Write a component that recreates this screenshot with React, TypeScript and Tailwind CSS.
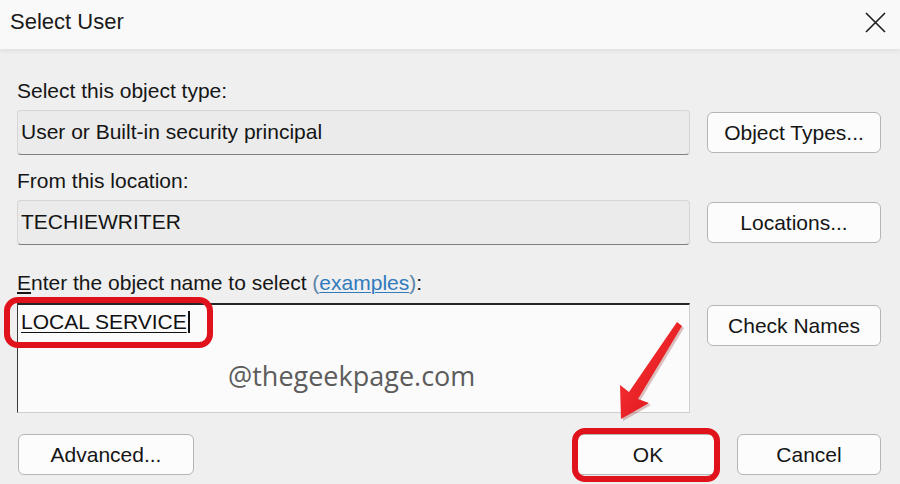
import React from 'react';

const font = { fontFamily: '"Liberation Sans", Arial, sans-serif' };

const Btn: React.FC<{ label: string; className?: string }> = ({ label, className = '' }) => (
  <button
    className={`h-[41px] rounded-[6px] border border-[#b5b5b5] bg-[#fcfcfc] text-[21px] text-[#151515] leading-none flex items-center justify-center ${className}`}
  >
    {label}
  </button>
);

const Field: React.FC<{ value: string }> = ({ value }) => (
  <div className="w-[673px] h-[45px] rounded-[4px] border border-[#d6d6d6] border-b-[#7f7f7f] bg-[#ebebeb] flex items-center pl-[3px] pb-[2px] text-[21px] text-[#141414]">
    {value}
  </div>
);

const App: React.FC = () => {
  return (
    <div className="relative w-[900px] h-[484px] overflow-hidden bg-[#efefef]" style={font}>
      {/* title bar */}
      <div className="relative z-10 h-[49px] bg-[#f9f9f9] flex items-start justify-between pl-[10px] pr-[14px] pt-[9px] shadow-[0_2px_5px_rgba(0,0,0,0.07)]">
        <span className="text-[22px] leading-[26px] text-[#1a1a1a]">Select User</span>
        <svg width="21" height="21" viewBox="0 0 21 21" className="mt-[3px]">
          <path d="M1 1L20 20M20 1L1 20" stroke="#1c1c1c" strokeWidth="1.6" fill="none" />
        </svg>
      </div>

      <div className="pl-[17px] pr-[19px]">
        <div className="mt-[30px] text-[21px] leading-[24px] text-[#161616]">Select this object type:</div>
        <div className="mt-[7px] flex items-center gap-[17px]">
          <Field value="User or Built-in security principal" />
          <Btn label="Object Types..." className="w-[174px]" />
        </div>

        <div className="mt-[14px] text-[21px] leading-[24px] text-[#161616]">From this location:</div>
        <div className="mt-[7px] flex items-center gap-[17px]">
          <Field value="TECHIEWRITER" />
          <Btn label="Locations..." className="w-[174px]" />
        </div>

        <div className="mt-[26px] text-[21px] leading-[24px] text-[#161616]">
          <span className="underline underline-offset-2">E</span>nter the object name to select{' '}
          <span className="text-[#5a86a8]">(</span>
          <span className="text-[#2f7bbd] underline underline-offset-2 decoration-1">examples</span>
          <span className="text-[#5a86a8]">)</span>:
        </div>
        <div className="mt-[8px] flex items-start gap-[17px]">
          <div className="w-[673px] h-[110px] bg-[#fbfbfb] border-t-2 border-t-[#262626] border-l border-l-[#3a3a3a] border-r border-r-[#cfcfcf] border-b border-b-[#cfcfcf] pl-[3px] pt-[5px]">
            <span className="text-[21px] leading-[24px] text-[#111] underline underline-offset-[3px] decoration-1">LOCAL SERVICE</span>
            <span className="inline-block w-[2px] h-[22px] bg-[#111] align-[-4px] ml-[1px]" />
          </div>
          <Btn label="Check Names" className="w-[174px] mt-[2px]" />
        </div>

        <div className="mt-[21px] flex items-center">
          <Btn label="Advanced..." className="w-[176px] ml-[1px]" />
          <div className="ml-auto flex gap-[17px]">
            <Btn label="OK" className="w-[144px]" />
            <Btn label="Cancel" className="w-[144px]" />
          </div>
        </div>
      </div>

      {/* watermark */}
      <div
        className="absolute left-[228px] top-[358px] text-[27px] leading-[36px] text-[#5c5c5c]"
        style={{ fontFamily: '"Open Sans", sans-serif' }}
      >
        @thegeekpage.com
      </div>

      {/* annotations */}
      <div className="absolute left-[4px] top-[297px] w-[209px] h-[51px] rounded-[14px] border-[6px] border-[#e0121c]" />
      <div className="absolute left-[572px] top-[428px] w-[148px] h-[54px] rounded-[13px] border-[6px] border-[#e0121c]" />

      <svg className="absolute inset-0 pointer-events-none" width="900" height="484" viewBox="0 0 900 484">
        <defs>
          <linearGradient id="ar" x1="0" y1="0" x2="1" y2="1">
            <stop offset="0" stopColor="#ff3a3a" />
            <stop offset="1" stopColor="#d40d14" />
          </linearGradient>
        </defs>
        <path
          d="M621 419 L620 385 L629 392 L677 322 L682 326 L638 399 L649 403 Z"
          fill="#7a0a0a"
          opacity="0.25"
          transform="translate(2 2)"
        />
        <path d="M621 419 L620 385 L629 392 L677 322 L682 326 L638 399 L649 403 Z" fill="url(#ar)" />
      </svg>
    </div>
  );
};

export default App;
